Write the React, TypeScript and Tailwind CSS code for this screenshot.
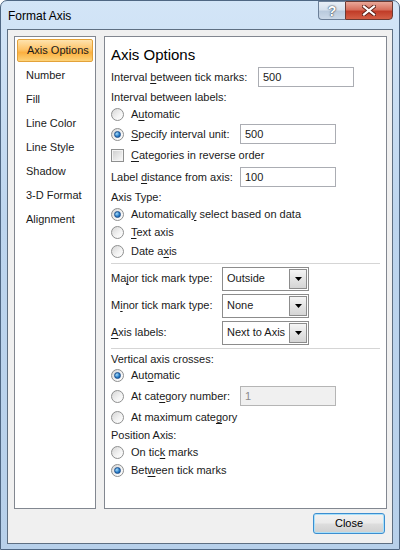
import React from "react";

const U = ({ c }: { c: string }) => <span className="underline underline-offset-[2px]">{c}</span>;

const Radio = ({ checked }: { checked?: boolean }) => (
  <span className="w-[13px] h-[13px] rounded-full border border-[#8e8f8f] bg-[linear-gradient(135deg,#d6d6d6,#f4f4f4_60%,#ffffff)] flex items-center justify-center shrink-0">
    {checked && (
      <span className="w-[7px] h-[7px] rounded-full border border-[#1d4f8c] bg-[radial-gradient(circle_at_35%_35%,#a9dcf9,#2a7fc9_55%,#0f4a92)]" />
    )}
  </span>
);

const Check = () => (
  <span className="w-[13px] h-[13px] border border-[#8e8f8f] bg-[#f4f4f4] flex items-center justify-center shrink-0">
    <span className="w-[9px] h-[9px] bg-[linear-gradient(135deg,#d0d0d0,#f8f8f8)]" />
  </span>
);

const Input = ({ value, w = 96, disabled }: { value: string; w?: number; disabled?: boolean }) => (
  <div
    className={
      "h-[20px] border flex items-center pl-[4px] " +
      (disabled ? "border-[#b5b5b5] bg-[#f0f0f0] text-[#8a8a8a]" : "border-[#abadb3] bg-white")
    }
    style={{ width: w }}
  >
    {value}
  </div>
);

const Select = ({ value }: { value: string }) => (
  <div className="w-[87px] h-[24px] border border-[#8c8c8c] bg-white flex items-center pl-[4px] pr-[1px] justify-between">
    <span className="whitespace-nowrap">{value}</span>
    <span className="w-[18px] h-[20px] border border-[#8c8c8c] bg-[linear-gradient(180deg,#f6f6f6,#e4e4e4_50%,#d5d5d5)] flex items-center justify-center shrink-0">
      <svg width="7" height="4" viewBox="0 0 7 4">
        <path d="M0 0H7L3.5 4Z" fill="#000" />
      </svg>
    </span>
  </div>
);

const Sep = () => (
  <div className="h-[4px] flex items-center">
    <div className="w-full h-px bg-[#d5d5d5]" />
  </div>
);

const RadioRow = ({ h, checked, children }: { h: number; checked?: boolean; children: React.ReactNode }) => (
  <div className="flex items-center gap-[7px]" style={{ height: h }}>
    <Radio checked={checked} />
    <span className="whitespace-nowrap">{children}</span>
  </div>
);

const TextRow = ({ h, children }: { h: number; children: React.ReactNode }) => (
  <div className="flex items-center whitespace-nowrap" style={{ height: h }}>
    {children}
  </div>
);

const navItems = ["Axis Options", "Number", "Fill", "Line Color", "Line Style", "Shadow", "3-D Format", "Alignment"];

export default function App() {
  return (
    <div className="w-[400px] h-[550px] font-['Liberation_Sans',Arial,sans-serif] text-[11px] text-[#1a1a1a] leading-none">
      <div className="w-full h-full flex flex-col border border-[#4f6783] rounded-t-[7px] bg-[linear-gradient(180deg,#d3e5f7,#bdd5ee_40%,#b7d0ea)] overflow-hidden">
        {/* title bar */}
        <div className="h-[28px] flex items-start justify-between shrink-0">
          <div className="pl-[7px] pt-[9px] text-[12px] text-black">Format Axis</div>
          <div className="flex mr-[6px]">
            <div className="w-[27px] h-[19px] border border-[#6b7f98] border-r-0 rounded-bl-[4px] bg-[linear-gradient(180deg,#e8eff7,#d6e1ed_45%,#b9cadd_55%,#cbd9e8)] flex items-center justify-center text-white font-bold text-[14px] [text-shadow:0_0_2px_#2a3a4e,0_0_1px_#2a3a4e]">
              ?
            </div>
            <div className="w-[48px] h-[19px] border border-[#6b3a33] rounded-br-[4px] bg-[linear-gradient(180deg,#e9a899,#d7705d_45%,#c13c28_55%,#d45f46)] flex items-center justify-center">
              <svg width="14" height="11" viewBox="0 0 14 11">
                <path d="M2 1.5L12 9.5M12 1.5L2 9.5" stroke="#5a2018" strokeWidth="4" strokeLinecap="square" />
                <path d="M2 1.5L12 9.5M12 1.5L2 9.5" stroke="#ffffff" strokeWidth="2.2" strokeLinecap="square" />
              </svg>
            </div>
          </div>
        </div>
        {/* client area */}
        <div className="flex-1 mx-[6px] mb-[5px] border border-[#5e6f82] bg-[#f0f0f0] flex flex-col">
          <div className="flex pt-[6px] pl-[6px] h-[479px]">
            {/* left nav */}
            <div className="w-[82px] h-[473px] border border-[#828790] bg-white pt-[2px] shrink-0">
              {navItems.map((n, i) => (
                <div key={n} className="h-[24px] px-[2px]">
                  {i === 0 ? (
                    <div className="h-[23px] rounded-[2px] border border-[#e3a23a] bg-[linear-gradient(180deg,#fee3ae,#fdc46a_45%,#fbb040_60%,#fdd37a)] flex items-center pl-[9px] whitespace-nowrap">
                      {n}
                    </div>
                  ) : (
                    <div className="h-[24px] flex items-center pl-[9px] whitespace-nowrap">{n}</div>
                  )}
                </div>
              ))}
            </div>
            {/* right panel */}
            <div className="ml-[8px] w-[283px] h-[473px] border border-[#828790] bg-white px-[6px]">
              <div className="h-[29px] flex items-center pt-[5px] text-[15px] text-black">Axis Options</div>
              <div className="h-[22px] flex items-center">
                <span className="w-[147px] whitespace-nowrap">
                  Interval <U c="b" />etween tick marks:
                </span>
                <Input value="500" />
              </div>
              <TextRow h={18}>Interval between labels:</TextRow>
              <RadioRow h={16}>
                A<U c="u" />tomatic
              </RadioRow>
              <div className="h-[24px] flex items-center">
                <Radio checked />
                <span className="ml-[7px] w-[109px] whitespace-nowrap">
                  <U c="S" />pecify interval unit:
                </span>
                <Input value="500" />
              </div>
              <div className="h-[19px] flex items-center gap-[7px]">
                <Check />
                <span className="whitespace-nowrap">
                  <U c="C" />ategories in reverse order
                </span>
              </div>
              <div className="h-[24px] flex items-center">
                <span className="w-[129px] whitespace-nowrap">
                  Label <U c="d" />istance from axis:
                </span>
                <Input value="100" />
              </div>
              <TextRow h={16}>Axis Type:</TextRow>
              <RadioRow h={18} checked>
                Automaticall<U c="y" /> select based on data
              </RadioRow>
              <RadioRow h={19}>
                <U c="T" />ext axis
              </RadioRow>
              <RadioRow h={19}>
                Date a<U c="x" />is
              </RadioRow>
              <Sep />
              <div className="h-[27px] flex items-center">
                <span className="w-[111px] whitespace-nowrap">
                  Ma<U c="j" />or tick mark type:
                </span>
                <Select value="Outside" />
              </div>
              <div className="h-[27px] flex items-center">
                <span className="w-[111px] whitespace-nowrap">
                  M<U c="i" />nor tick mark type:
                </span>
                <Select value="None" />
              </div>
              <div className="h-[27px] flex items-center">
                <span className="w-[111px] whitespace-nowrap">
                  <U c="A" />xis labels:
                </span>
                <Select value="Next to Axis" />
              </div>
              <Sep />
              <TextRow h={18}>Vertical axis crosses:</TextRow>
              <RadioRow h={15} checked>
                Aut<U c="o" />matic
              </RadioRow>
              <div className="h-[26px] flex items-center">
                <Radio />
                <span className="ml-[7px] w-[109px] whitespace-nowrap">
                  At cat<U c="e" />gory number:
                </span>
                <Input value="1" disabled />
              </div>
              <RadioRow h={17}>
                At maximum cate<U c="g" />ory
              </RadioRow>
              <TextRow h={19}>Position Axis:</TextRow>
              <RadioRow h={15}>
                On tic<U c="k" /> marks
              </RadioRow>
              <RadioRow h={20} checked>
                Bet<U c="w" />een tick marks
              </RadioRow>
            </div>
          </div>
          <div className="flex justify-end pr-[7px] mt-[4px]">
            <button className="w-[72px] h-[21px] rounded-[3px] border border-[#3c8ed0] shadow-[inset_0_0_0_1px_#a8e0fa] bg-[linear-gradient(180deg,#f2f2f2,#ebebeb_45%,#dddddd_55%,#cfcfcf)] text-[11px] text-black">
              Close
            </button>
          </div>
        </div>
      </div>
    </div>
  );
}
